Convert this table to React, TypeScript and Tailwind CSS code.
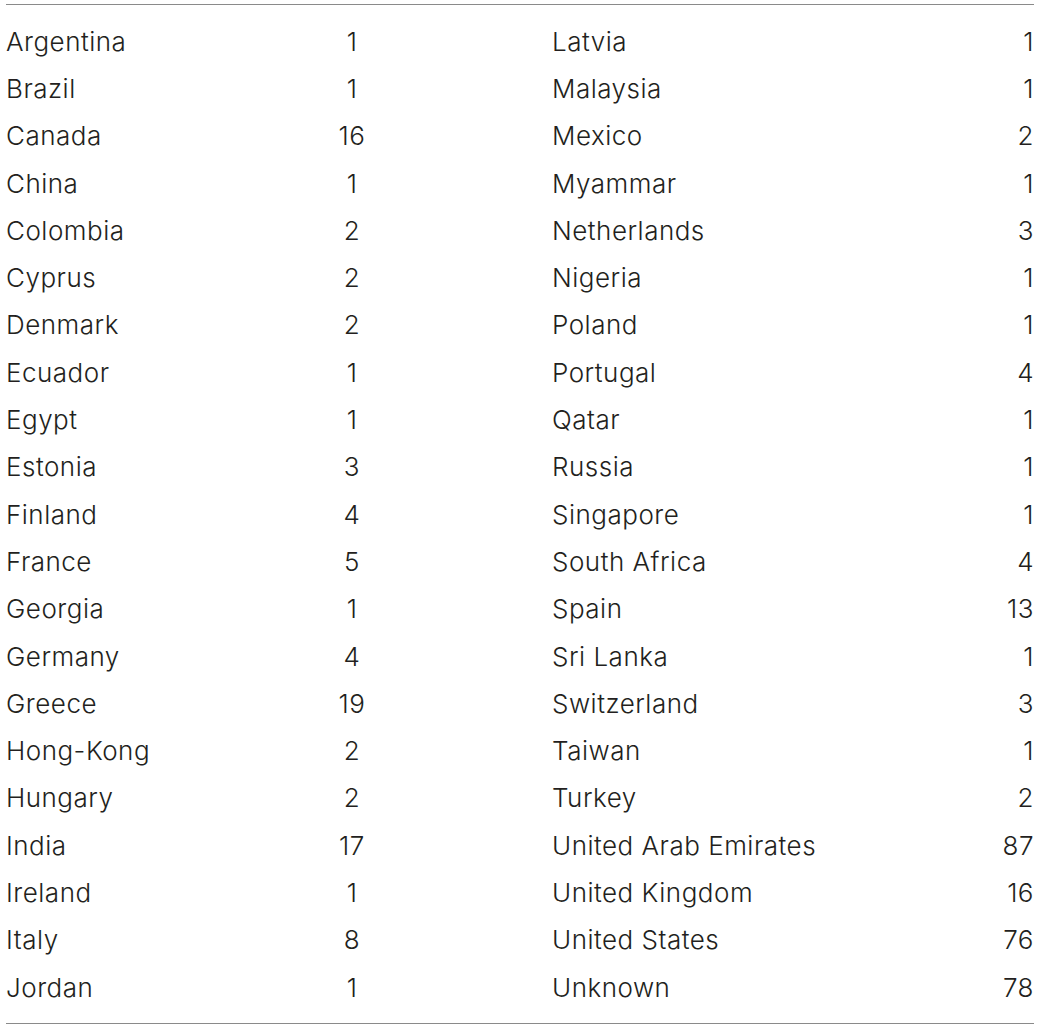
import React from "react";

const left: [string, string][] = [
  ["Argentina", "1"],
  ["Brazil", "1"],
  ["Canada", "16"],
  ["China", "1"],
  ["Colombia", "2"],
  ["Cyprus", "2"],
  ["Denmark", "2"],
  ["Ecuador", "1"],
  ["Egypt", "1"],
  ["Estonia", "3"],
  ["Finland", "4"],
  ["France", "5"],
  ["Georgia", "1"],
  ["Germany", "4"],
  ["Greece", "19"],
  ["Hong-Kong", "2"],
  ["Hungary", "2"],
  ["India", "17"],
  ["Ireland", "1"],
  ["Italy", "8"],
  ["Jordan", "1"],
];

const right: [string, string][] = [
  ["Latvia", "1"],
  ["Malaysia", "1"],
  ["Mexico", "2"],
  ["Myammar", "1"],
  ["Netherlands", "3"],
  ["Nigeria", "1"],
  ["Poland", "1"],
  ["Portugal", "4"],
  ["Qatar", "1"],
  ["Russia", "1"],
  ["Singapore", "1"],
  ["South Africa", "4"],
  ["Spain", "13"],
  ["Sri Lanka", "1"],
  ["Switzerland", "3"],
  ["Taiwan", "1"],
  ["Turkey", "2"],
  ["United Arab Emirates", "87"],
  ["United Kingdom", "16"],
  ["United States", "76"],
  ["Unknown", "78"],
];

export default function App() {
  return (
    <div className="w-[1040px] h-[1029px] bg-white pt-[4px] text-[#231f20] font-[Inter,Liberation_Sans,sans-serif] font-light text-[26px] tracking-[0.5px]">
      <div className="ml-[6px] w-[1028px] border-t-[1.5px] border-[#8a8a8a]" />
      <div className="pt-[13px] pb-[12px]">
        {left.map((l, i) => {
          const r = right[i];
          return (
            <div key={i} className="flex h-[47.3px] items-center leading-none">
              <div className="w-[302px] pl-[6px]">{l[0]}</div>
              <div className="w-[100px] text-center">{l[1]}</div>
              <div className="w-[150px]" />
              <div className="flex-1">{r[0]}</div>
              <div className="pr-[6px] text-right">{r[1]}</div>
            </div>
          );
        })}
      </div>
      <div className="ml-[6px] w-[1028px] border-t-[1.5px] border-[#8a8a8a]" />
    </div>
  );
}
